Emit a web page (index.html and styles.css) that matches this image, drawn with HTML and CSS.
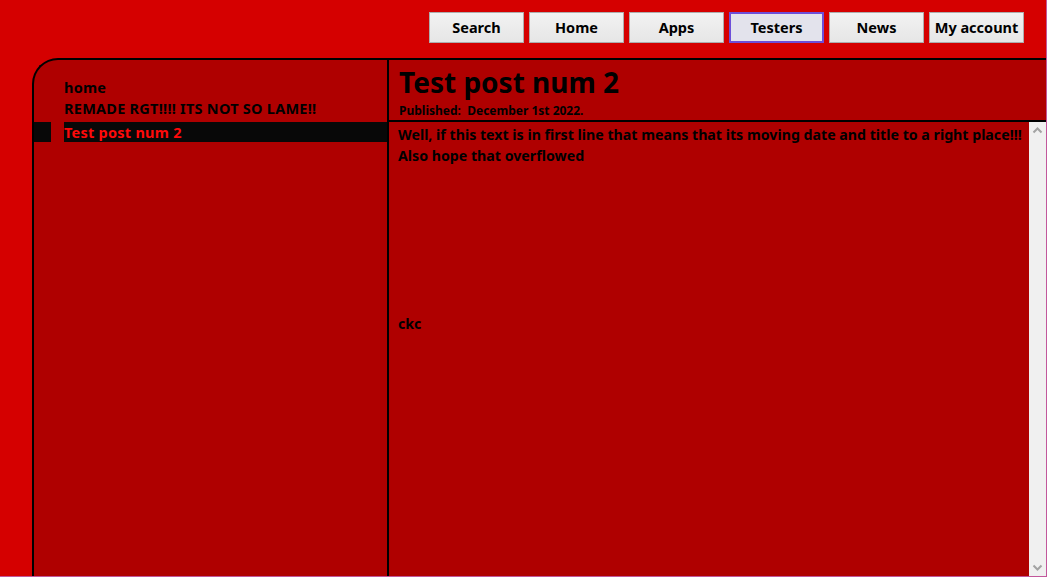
FILE: index.html
```html
<!DOCTYPE html>
<html lang="en">
<head>
<meta charset="utf-8">
<title>Test post num 2</title>
<link rel="stylesheet" href="styles.css">
</head>
<body>
<div class="page">
  <nav class="topnav">
    <button class="navbtn">Search</button>
    <button class="navbtn">Home</button>
    <button class="navbtn">Apps</button>
    <button class="navbtn navbtn-active">Testers</button>
    <button class="navbtn">News</button>
    <button class="navbtn">My account</button>
  </nav>
  <main class="panel">
    <aside class="sidebar">
      <ul class="postlist">
        <li class="postitem"><span class="marker"></span><span class="postlink">home</span></li>
        <li class="postitem"><span class="marker"></span><span class="postlink">REMADE RGT!!!! ITS NOT SO LAME!!</span></li>
        <li class="postitem selected"><span class="marker"></span><span class="postlink">Test post num 2</span></li>
      </ul>
    </aside>
    <section class="post">
      <header class="posthead">
        <h1 class="posttitle">Test post num 2</h1>
        <div class="postdate">Published:&nbsp; December 1st 2022.</div>
      </header>
      <div class="postbody">
        <div class="posttext">
          <p class="line">Well, if this text is in first line that means that its moving date and title to a right place!!!</p>
          <p class="line">Also hope that overflowed</p>
          <p class="line blank">&nbsp;</p>
          <p class="line blank">&nbsp;</p>
          <p class="line blank">&nbsp;</p>
          <p class="line blank">&nbsp;</p>
          <p class="line blank">&nbsp;</p>
          <p class="line blank">&nbsp;</p>
          <p class="line blank">&nbsp;</p>
          <p class="line">ckc</p>
        </div>
        <div class="scrollbar">
          <svg class="arrow" width="17" height="17" viewBox="0 0 17 17"><path d="M4.5 10.5 L8.5 6.5 L12.5 10.5" fill="none" stroke="#a3a3a3" stroke-width="2"/></svg>
          <svg class="arrow" width="17" height="17" viewBox="0 0 17 17"><path d="M4.5 6.5 L8.5 10.5 L12.5 6.5" fill="none" stroke="#a3a3a3" stroke-width="2"/></svg>
        </div>
      </div>
    </section>
  </main>
</div>
</body>
</html>
```

FILE: styles.css
```css
* { box-sizing: border-box; }
html, body { margin: 0; padding: 0; }
body {
  background: #d50000;
  font-family: "Noto Sans", "Open Sans", sans-serif;
  font-weight: 700;
  color: #000;
  overflow: hidden;
}
.page {
  width: 1047px;
  height: 577px;
  border-right: 1px solid #c2579b;
  border-bottom: 1px solid #c2579b;
  display: flex;
  flex-direction: column;
  padding: 12px 22px 0 32px;
  overflow: hidden;
}
.topnav {
  display: flex;
  justify-content: flex-end;
  gap: 5px;
}
.navbtn {
  width: 95px;
  height: 31px;
  border: 1px solid #adadad;
  background: linear-gradient(#f2f2f2, #e6e6e6);
  font-family: inherit;
  font-weight: 700;
  font-size: 14.5px;
  color: #000;
  padding: 0 0 2px 0;
}
.navbtn-active {
  border: 2px solid #6d4fd9;
  background: #e3e3ec;
}
.panel {
  flex: 1;
  margin-top: 15px;
  margin-right: -22px;
  display: flex;
  border-left: 2px solid #000;
  border-top: 2px solid #000;
  border-top-left-radius: 26px;
  background: #af0000;
  min-height: 0;
}
.sidebar {
  width: 355px;
  border-right: 2px solid #000;
  padding-top: 17px;
  flex-shrink: 0;
}
.postlist {
  list-style: none;
  margin: 0;
  padding: 0;
}
.postitem {
  display: flex;
  height: 21px;
  align-items: stretch;
  font-size: 14.5px;
  letter-spacing: 0.25px;
  line-height: 20px;
}
.marker {
  width: 17px;
  margin-right: 13px;
}
.postlink {
  flex: 1;
  padding-left: 0;
}
.selected { height: 20px; margin-top: 3px; }
.selected .marker, .selected .postlink {
  background: #080808;
}
.selected .postlink { color: #ff0a0a; }
.post {
  flex: 1;
  display: flex;
  flex-direction: column;
  min-width: 0;
}
.posthead {
  height: 62px;
  border-bottom: 2px solid #000;
  padding: 3px 0 0 10px;
}
.posttitle {
  margin: 0;
  font-size: 28px;
  line-height: 38px;
  font-weight: 700;
}
.postdate {
  font-size: 12px;
  line-height: 16px;
  margin-top: 2px;
}
.postbody {
  flex: 1;
  display: flex;
  min-height: 0;
}
.posttext {
  flex: 1;
  padding: 2px 0 0 9px;
  font-size: 14.2px;
  line-height: 21px;
}
.line { margin: 0; white-space: nowrap; }
.scrollbar {
  width: 17px;
  background: #f0f0f0;
  display: flex;
  flex-direction: column;
  justify-content: space-between;
}
.arrow { display: block; }
```
